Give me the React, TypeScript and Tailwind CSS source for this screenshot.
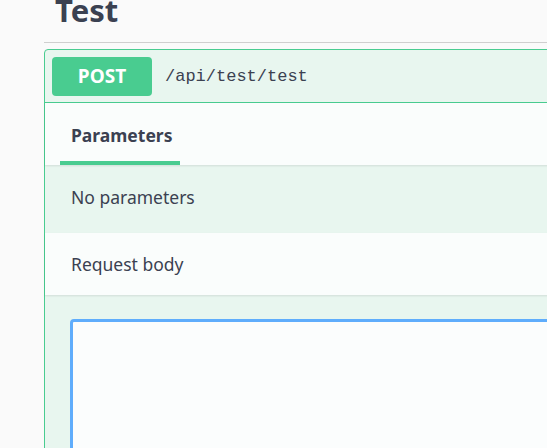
import React from "react";

export default function App() {
  const sans = { fontFamily: '"Noto Sans", "Open Sans", sans-serif' };
  return (
    <div className="h-[448px] w-[547px] overflow-hidden bg-[#fafafa] text-[#3b4151]" style={sans}>
      <div className="ml-[44px] flex w-[700px] flex-col">
        <div className="flex h-[43px] items-start border-b border-[#cfcfcf] pl-[11px]">
          <h4 className="mt-[-8px] text-[31px] font-bold leading-[36px] text-[#3b4151]">Test</h4>
        </div>
        <div className="mt-[6px] rounded-[4px] border border-[#49cc90] bg-[#e8f6ef]">
          <div className="flex items-center border-b border-[#49cc90] pl-[7px] pt-[7px] pb-[6px]">
            <span className="flex h-[39px] w-[100px] items-center justify-center rounded-[4px] bg-[#49cc90] text-[19px] font-bold text-white">
              POST
            </span>
            <span
              className="ml-[13px] text-[17px] text-[#3b4151]"
              style={{ fontFamily: '"Liberation Mono", monospace' }}
            >
              /api/test/test
            </span>
          </div>
          <div className="relative z-10 flex h-[62px] items-end bg-[#fafdfc] pl-[15px] shadow-[0_1px_2px_rgba(0,0,0,0.1)]">
            <div className="flex h-full flex-col justify-end">
              <span className="px-[11px] pb-[13px] text-[17.5px] font-bold">Parameters</span>
              <div className="h-[4px] w-[120px] bg-[#49cc90]" />
            </div>
          </div>
          <div className="flex h-[68px] items-center pb-[3px] pl-[26px] text-[17.5px]">No parameters</div>
          <div className="relative z-10 flex h-[62px] items-center bg-[#fafdfc] pl-[26px] text-[17.5px] shadow-[0_1px_2px_rgba(0,0,0,0.1)]">
            Request body
          </div>
          <div className="pl-[25px] pt-[24px]">
            <div className="h-[200px] rounded-[4px] border-[3px] border-[#5fadfc] bg-[#fbfdfd]" />
          </div>
        </div>
      </div>
    </div>
  );
}
